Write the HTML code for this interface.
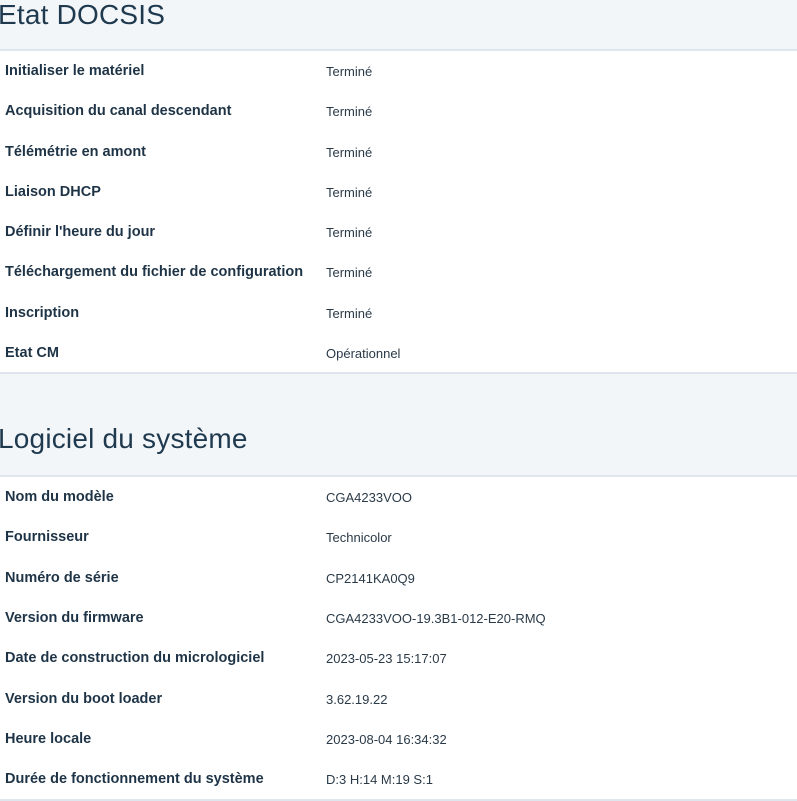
<!DOCTYPE html>
<html><head><meta charset="utf-8"><style>
body{margin:0;width:797px;height:800px;overflow:hidden;background:#fff;font-family:"Liberation Sans",sans-serif;color:#1e3446}
.h{background:#f3f6f9;border-bottom:2px solid #dfe6ee;position:relative}
.h span{position:absolute;left:-2px;font-size:28px;color:#1f3a4f;letter-spacing:0.2px}
.r{height:40.3px;position:relative}
.r b{position:absolute;left:5px;top:12px;font-size:14.5px;font-weight:bold;color:#1e3446}
.r i{position:absolute;left:326px;top:13px;font-size:13px;font-style:normal;color:#2a3a48}
</style></head><body>
<div class="h" style="height:49px"><span style="top:-1px">Etat DOCSIS</span></div>
<div class="r"><b>Initialiser le matériel</b><i>Terminé</i></div>
<div class="r"><b>Acquisition du canal descendant</b><i>Terminé</i></div>
<div class="r"><b>Télémétrie en amont</b><i>Terminé</i></div>
<div class="r"><b>Liaison DHCP</b><i>Terminé</i></div>
<div class="r"><b>Définir l'heure du jour</b><i>Terminé</i></div>
<div class="r"><b>Téléchargement du fichier de configuration</b><i>Terminé</i></div>
<div class="r"><b>Inscription</b><i>Terminé</i></div>
<div class="r" style="height:39px"><b>Etat CM</b><i>Opérationnel</i></div>
<div class="h" style="height:101px;border-top:2px solid #dfe6ee"><span style="top:49px">Logiciel du système</span></div>
<div class="r"><b>Nom du modèle</b><i>CGA4233VOO</i></div>
<div class="r"><b>Fournisseur</b><i>Technicolor</i></div>
<div class="r"><b>Numéro de série</b><i>CP2141KA0Q9</i></div>
<div class="r"><b>Version du firmware</b><i>CGA4233VOO-19.3B1-012-E20-RMQ</i></div>
<div class="r"><b>Date de construction du micrologiciel</b><i>2023-05-23 15:17:07</i></div>
<div class="r"><b>Version du boot loader</b><i>3.62.19.22</i></div>
<div class="r"><b>Heure locale</b><i>2023-08-04 16:34:32</i></div>
<div class="r" style="border-bottom:2px solid #dfe6ee"><b>Durée de fonctionnement du système</b><i>D:3 H:14 M:19 S:1</i></div>
</body></html>
